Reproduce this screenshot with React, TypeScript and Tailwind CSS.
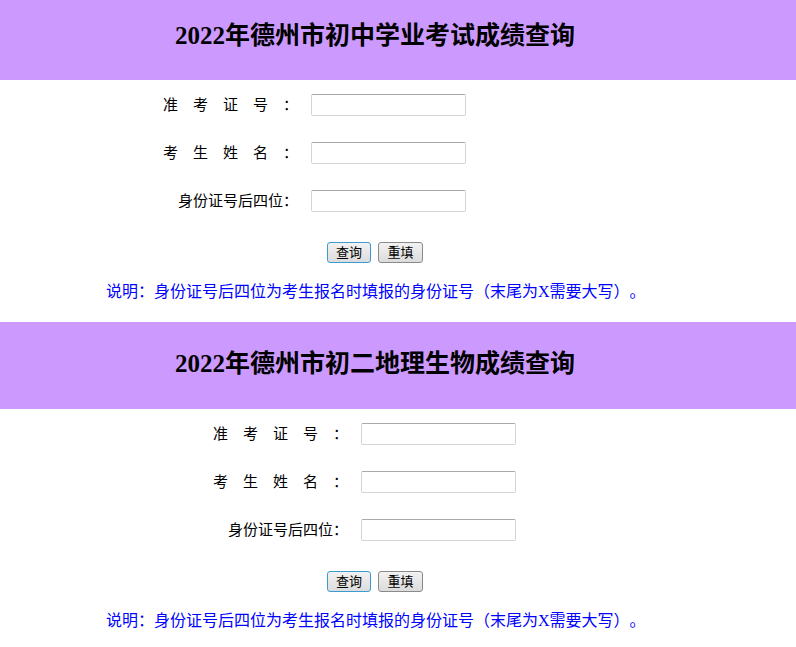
import React from "react";

const cjk = { fontFamily: '"Liberation Serif", "Noto Sans CJK SC", serif' };
const sans = { fontFamily: '"Liberation Sans", "Noto Sans CJK SC", sans-serif' };

// one query block: purple header + form + buttons + note
const QueryBlock = ({ title, first, shift }: { title: string; first?: boolean; shift: boolean }) => {
    const rows = ["准　考　证　号　：", "考　生　姓　名　：", "身份证号后四位："];
    return (
        <section className="[text-spacing-trim:space-all]">
            <div className={`bg-[#cc99ff] ${first ? "h-[80px] pt-[23px]" : "h-[87px] pt-[29px]"}`}>
                <div className="w-[750px] text-center">
                    <h1 className="text-[25px] leading-[26px] font-bold text-black whitespace-nowrap" style={cjk}>{title}</h1>
                </div>
            </div>

            <div className={`pt-[14px] flex flex-col gap-[26px] ${shift ? "pl-[208px]" : "pl-[158px]"}`}>
                {rows.map((r) => (
                    <div key={r} className="flex items-center h-[22px]">
                        <label className="w-[140px] text-right text-[15px] leading-[22px] text-black whitespace-nowrap" style={cjk}>{r}</label>
                        <input type="text" className="ml-[13px] w-[155px] h-[22px] bg-white border border-[#d4d4d4] border-t-[#a9a9a9] rounded-[2px] outline-none" />
                    </div>
                ))}
            </div>

            <div className="w-[750px] mt-[30px] flex justify-center gap-[7px]">
                <button className="w-[44px] h-[21px] text-[13px] leading-[17px] text-black rounded-[3px] border border-[#3c9bd1] bg-gradient-to-b from-[#f2f2f2] to-[#dcdcdc]" style={sans}>查询</button>
                <button className="w-[45px] h-[21px] text-[13px] leading-[17px] text-black rounded-[3px] border border-[#8a8a8a] bg-gradient-to-b from-[#f2f2f2] to-[#dcdcdc]" style={sans}>重填</button>
            </div>

            <p className="pl-[106px] mt-[19px] mb-[20px] text-[16px] leading-[20px] text-[#0000ff] whitespace-nowrap" style={cjk}>
                说明：身份证号后四位为考生报名时填报的身份证号（末尾为X需要大写）。
            </p>
        </section>
    );
};

export default function App() {
    return (
        <div className="w-[796px] min-h-[647px] bg-white overflow-hidden">
            <QueryBlock first shift={false} title="2022年德州市初中学业考试成绩查询" />
            <QueryBlock shift title="2022年德州市初二地理生物成绩查询" />
        </div>
    );
}
